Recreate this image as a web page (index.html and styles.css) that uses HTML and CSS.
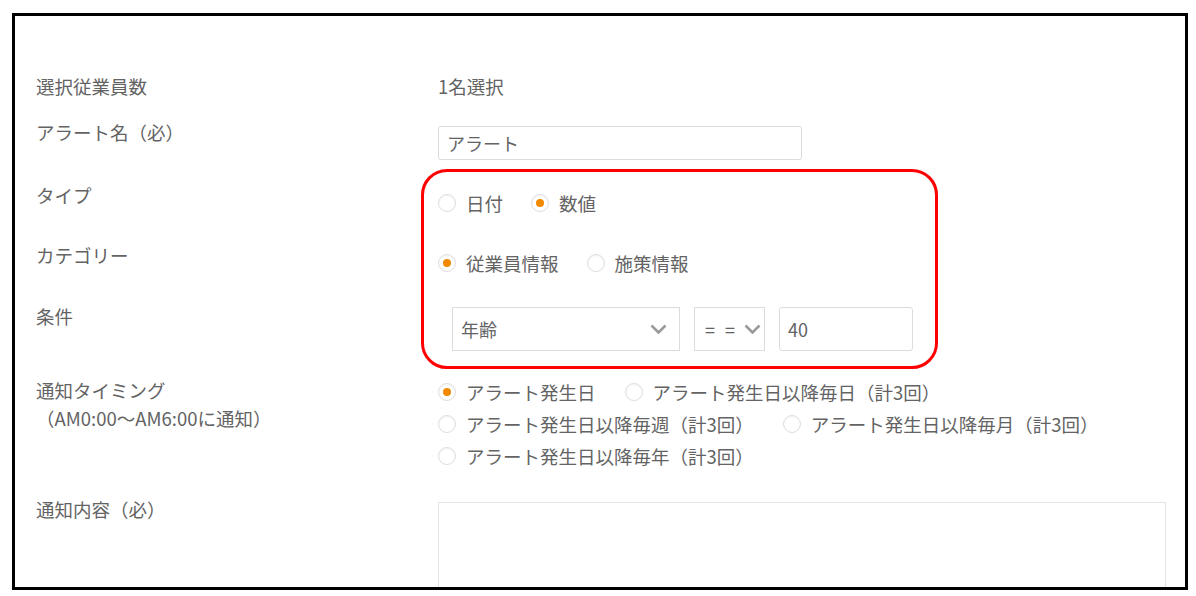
FILE: index.html
```html
<!DOCTYPE html>
<html lang="ja">
<head>
  <meta charset="UTF-8">
  <title>アラート設定</title>
  <link rel="stylesheet" href="styles.css">
</head>
<body>

  <div class="frame">
    <div class="form">

      <div class="row r-count">
        <div class="label">選択従業員数</div>
        <div class="value">1名選択</div>
      </div>

      <div class="row r-name">
        <div class="label">アラート名（必）</div>
        <div class="value">
          <input type="text" class="text-input name-input" value="アラート">
        </div>
      </div>

      <!-- 赤枠で囲まれた部分 -->
      <div class="row group">
        <div class="group-labels">
          <div class="label l-type">タイプ</div>
          <div class="label l-cat">カテゴリー</div>
          <div class="label">条件</div>
        </div>
        <div class="highlight">
          <div class="radio-row">
            <label class="radio"><span class="dot"></span>日付</label>
            <label class="radio"><span class="dot checked"></span>数値</label>
          </div>
          <div class="radio-row r-cat">
            <label class="radio"><span class="dot checked"></span>従業員情報</label>
            <label class="radio"><span class="dot"></span>施策情報</label>
          </div>
          <div class="cond-row">
            <div class="select sel-field">
              <span>年齢</span>
              <svg class="chev" width="17" height="10" viewBox="0 0 17 10"><path d="M1.5 1.5 L8.5 8.5 L15.5 1.5" fill="none" stroke="#9a9a9a" stroke-width="2.6"/></svg>
            </div>
            <div class="select sel-op">
              <span class="op">= =</span>
              <svg class="chev" width="17" height="10" viewBox="0 0 17 10"><path d="M1.5 1.5 L8.5 8.5 L15.5 1.5" fill="none" stroke="#9a9a9a" stroke-width="2.6"/></svg>
            </div>
            <input type="text" class="text-input num-input" value="40">
          </div>
        </div>
      </div>

      <div class="row r-timing">
        <div class="label">通知タイミング<br>（AM0:00～AM6:00に通知）</div>
        <div class="value">
          <div class="timing-line">
            <label class="radio"><span class="dot checked"></span>アラート発生日</label>
            <label class="radio"><span class="dot"></span>アラート発生日以降毎日（計3回）</label>
          </div>
          <div class="timing-line">
            <label class="radio"><span class="dot"></span>アラート発生日以降毎週（計3回）</label>
            <label class="radio"><span class="dot"></span>アラート発生日以降毎月（計3回）</label>
          </div>
          <div class="timing-line">
            <label class="radio"><span class="dot"></span>アラート発生日以降毎年（計3回）</label>
          </div>
        </div>
      </div>

      <div class="row r-content">
        <div class="label">通知内容（必）</div>
        <div class="value">
          <textarea class="content-area"></textarea>
        </div>
      </div>

    </div>
  </div>

</body>
</html>
```

FILE: styles.css
```css
/* reset */
*, *::before, *::after {
  box-sizing: border-box;
}
html, body {
  margin: 0;
  padding: 0;
  background: #fff;
  overflow: hidden;
  font-family: "Noto Sans CJK JP", "Noto Sans", sans-serif;
  font-size: 18.5px;
  color: #636363;
}

/* 黒い外枠 */
.frame {
  margin: 13px 0 0 12px;
  width: 1176px;
  height: 577px;
  border: 3px solid #000;
  overflow: hidden;
}

.form {
  padding: 57px 0 0 21px;
}

/* 行 */
.row {
  display: flex;
  align-items: flex-start;
}
.label {
  width: 402px;
  flex-shrink: 0;
  line-height: 26px;
}
.value {
  line-height: 26px;
}

.r-count {
  height: 46px;
}
.r-name {
  height: 50px;
}

/* 入力欄 */
.text-input {
  font-family: inherit;
  font-size: 18px;
  color: #636363;
  border: 1px solid #dcdcdc;
  border-radius: 3px;
  background: #fff;
  outline: none;
}
.name-input {
  margin-top: 7px;
  width: 364px;
  height: 34px;
  padding: 0 8px;
}

/* 赤枠グループ */
.group {
  height: 200px;
}
.group-labels {
  padding-top: 13px;
}
.l-type {
  height: 60px;
}
.l-cat {
  height: 61px;
}
.highlight {
  margin-left: -17px;
  width: 517px;
  height: 200px;
  border: 3px solid #f00;
  border-radius: 26px;
  padding: 12px 0 0 14px;
}
.radio-row {
  display: flex;
  align-items: center;
  height: 38px;
  margin-bottom: 22px;
}
.radio-row.r-cat {
  margin-bottom: 25px;
}

/* ラジオボタン */
.radio {
  display: flex;
  align-items: center;
  margin-right: 28px;
  white-space: nowrap;
}
.dot {
  width: 18px;
  height: 18px;
  border: 1px solid #dedede;
  border-radius: 50%;
  margin-right: 10px;
  flex-shrink: 0;
  display: flex;
  align-items: center;
  justify-content: center;
  box-shadow: inset 0 1px 2px rgba(0, 0, 0, 0.05);
}
.dot.checked::after {
  content: "";
  width: 8px;
  height: 8px;
  border-radius: 50%;
  background: #f18a00;
}

/* 条件 */
.cond-row {
  display: flex;
  gap: 14px;
  margin-left: 14px;
}
.select {
  height: 44px;
  border: 1px solid #dcdcdc;
  display: flex;
  align-items: center;
  justify-content: space-between;
  font-size: 18px;
}
.sel-field {
  width: 228px;
  padding: 0 12px 0 8px;
}
.sel-op {
  width: 71px;
  padding: 0 3px 0 10px;
}
.op {
  letter-spacing: 3px;
}
.chev {
  display: block;
}
.num-input {
  width: 134px;
  height: 44px;
  padding: 0 8px;
}

/* 通知タイミング */
.r-timing {
  margin-top: 7px;
}
.r-timing .label {
  line-height: 28px;
}
.timing-line {
  display: flex;
  align-items: center;
  height: 32px;
}
.timing-line .radio {
  margin-right: 29px;
}

/* 通知内容 */
.r-content {
  margin-top: 24px;
}
.content-area {
  display: block;
  margin-top: 6px;
  width: 728px;
  height: 120px;
  border: 1px solid #e3e3e3;
  resize: none;
  font-family: inherit;
  outline: none;
}
```
